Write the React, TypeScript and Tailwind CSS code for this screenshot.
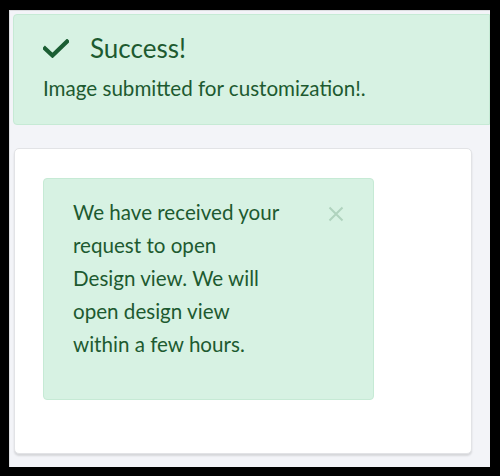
function CheckIcon() {
  return (
    <svg width="26" height="19" viewBox="0 0 26 19" className="shrink-0">
      <path d="M2 9.5 L9.5 16.5 L24 2.5" fill="none" stroke="#1b5e33" strokeWidth="4.2" strokeLinecap="square" />
    </svg>
  )
}

function CloseIcon() {
  return (
    <svg width="16" height="16" viewBox="0 0 16 16">
      <path d="M1.5 1.5 L14.5 14.5 M14.5 1.5 L1.5 14.5" stroke="#b0d3be" strokeWidth="2" />
    </svg>
  )
}

export default function App() {
  return (
    <div className="w-[500px] h-[476px] bg-black pt-[10px] pl-[9px] pr-[10px] pb-[9px] font-['Lato',sans-serif]">
      <div className="h-full bg-[#f3f4f8] border-l border-t border-[#dcdde0] pt-[3px] pl-[3px] flex flex-col overflow-hidden">
        <div className="h-[111px] bg-[#d7f2e3] border border-[#c6ead5] rounded-l-[4px] pl-[29px] pt-[17px] text-[#1d5a30]">
          <div className="flex items-center gap-[21px] h-[32px]">
            <CheckIcon />
            <span className="text-[26px] leading-none">Success!</span>
          </div>
          <p className="mt-[11px] text-[20.6px] leading-[26px] whitespace-nowrap">Image submitted for customization!.</p>
        </div>
        <div className="mt-[23px] ml-[1px] mr-[18px] h-[306px] bg-white rounded-[5px] border border-[#e2e3e6] shadow-[0_2px_2px_rgba(0,0,0,0.12)] pt-[29px] pl-[28px]">
          <div className="w-[331px] h-[222px] bg-[#d7f2e3] border border-[#c6ead5] rounded-[4px] pl-[29px] pt-[17px] pr-[29px] flex items-start text-[#1d5a30]">
            <p className="w-[225px] text-[20.6px] leading-[33px] whitespace-nowrap">
              We have received your<br />
              request to open<br />
              Design view. We will<br />
              open design view<br />
              within a few hours.
            </p>
            <button className="ml-auto mt-[10px]">
              <CloseIcon />
            </button>
          </div>
        </div>
      </div>
    </div>
  )
}
